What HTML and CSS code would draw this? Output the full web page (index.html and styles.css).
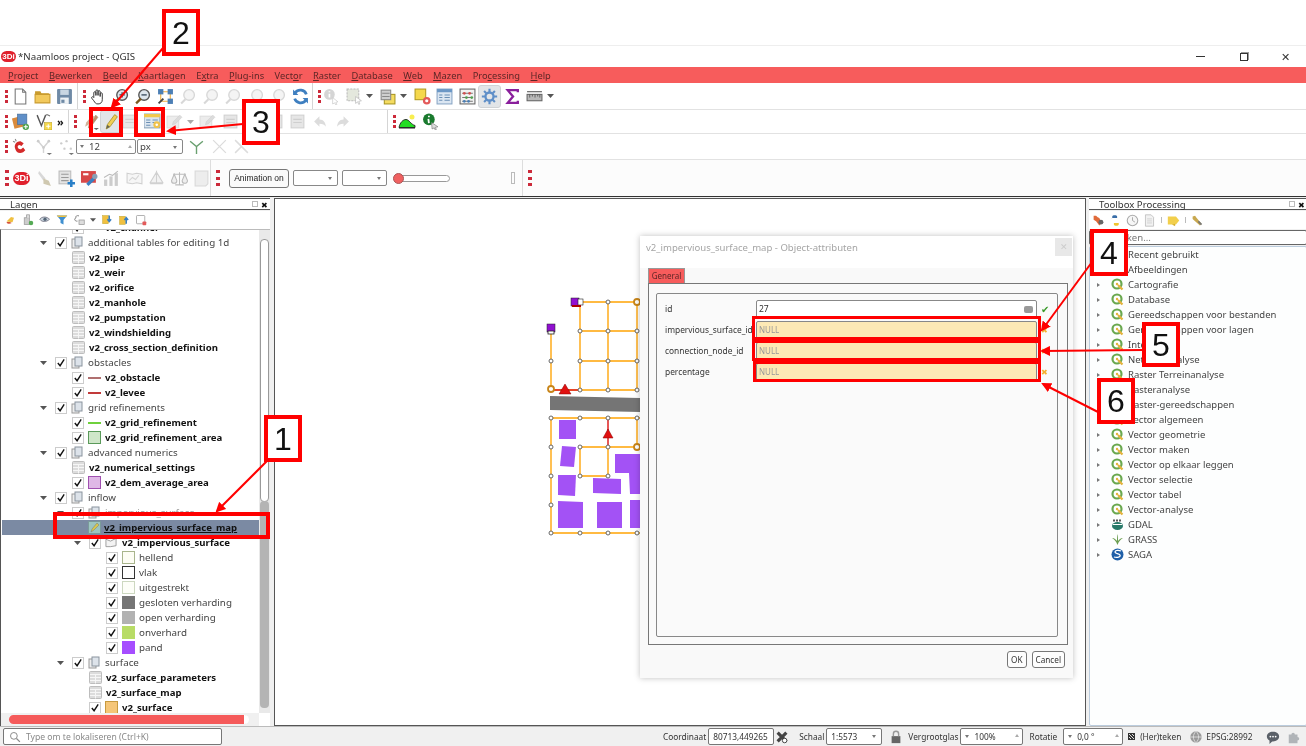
FILE: index.html
```html
<!DOCTYPE html>
<html lang="nl">
<head>
<meta charset="utf-8">
<title>*Naamloos project - QGIS</title>
<link rel="stylesheet" href="styles.css">
</head>
<body>
<svg class="defs" width="0" height="0">
  <symbol id="new" viewBox="0 0 16 16"><path d="M3 1h7l3 3v11H3z" fill="#fff" stroke="#777"/><path d="M10 1v3h3" fill="none" stroke="#777"/></symbol>
  <symbol id="open" viewBox="0 0 16 16"><path d="M1 3h5l1 2h7v2H1z" fill="#c99b2e"/><path d="M1 14V6h14v8z" fill="#f2c95c" stroke="#c99b2e"/></symbol>
  <symbol id="save" viewBox="0 0 16 16"><rect x="1" y="1" width="14" height="14" rx="1" fill="#6f8aa6"/><rect x="4" y="1.500" width="8" height="5" fill="#c9d6e2"/><rect x="4" y="9" width="8" height="6" fill="#eef2f5"/><rect x="5" y="11" width="3" height="3" fill="#6f8aa6"/></symbol>
  <symbol id="hand" viewBox="0 0 16 16"><path d="M4.500 9V4.500a1 1 0 0 1 2 0V7V2.800a1 1 0 0 1 2 0V7V3.500a1 1 0 0 1 2 0V8V5.500a1 1 0 0 1 2 0V11c0 2.500-1.500 4-4 4S6 14 4.500 12L2.500 9.500C2 8.500 3.500 7.500 4.500 9z" fill="#fff" stroke="#333" stroke-width=".9"/></symbol>
  <symbol id="zin" viewBox="0 0 16 16"><circle cx="9.500" cy="6.500" r="5" fill="#dfe6ec" stroke="#555" stroke-width="1.300"/><path d="M6.500 10L2 14.500" stroke="#7a5a20" stroke-width="2.200"/><path d="M7 6.500h5M9.500 4v5" stroke="#345" stroke-width="1.200"/></symbol>
  <symbol id="zout" viewBox="0 0 16 16"><circle cx="9.500" cy="6.500" r="5" fill="#dfe6ec" stroke="#555" stroke-width="1.300"/><path d="M6.500 10L2 14.500" stroke="#7a5a20" stroke-width="2.200"/><path d="M7 6.500h5" stroke="#345" stroke-width="1.200"/></symbol>
  <symbol id="zfull" viewBox="0 0 16 16"><path d="M4 3.500h8M3.500 4v8M12.500 4v8M4 12.500h8" stroke="#f0b040" stroke-width="1" fill="none"/><rect x="1" y="1" width="5" height="5" fill="#4c7fb5"/><rect x="10" y="1" width="5" height="5" fill="#4c7fb5"/><rect x="10" y="10" width="5" height="5" fill="#4c7fb5"/><path d="M6 10L1.500 14.500" stroke="#444" stroke-width="1.800"/></symbol>
  <symbol id="zdim" viewBox="0 0 16 16"><circle cx="9.500" cy="6.500" r="5" fill="#f4f4f4" stroke="#d8d8d8" stroke-width="1.300"/><path d="M6 10.500L2 14.500" stroke="#d8d8d8" stroke-width="2"/></symbol>
  <symbol id="refresh" viewBox="0 0 16 16"><path d="M13.500 6A6 6 0 0 0 3 4.500M2.500 10A6 6 0 0 0 13 11.500" fill="none" stroke="#3f7fc0" stroke-width="2.600"/><path d="M1 1.500v5h5zM15 14.500v-5h-5z" fill="#3f7fc0"/></symbol>
  <symbol id="idim" viewBox="0 0 16 16"><circle cx="7" cy="6" r="5" fill="#d5d5d5"/><path d="M7 3v1M7 5.500V9" stroke="#fff" stroke-width="1.600"/><path d="M10 9l5 4-2 .5 1 2-1 .5-1-2-2 1z" fill="#fff" stroke="#ccc" stroke-width=".7"/></symbol>
  <symbol id="seldim" viewBox="0 0 16 16"><rect x="1" y="1" width="11" height="11" fill="#e4e8dd" stroke="#bbb" stroke-dasharray="2 1"/><path d="M9 8l5.500 4-2.500.5 1 2.500-1 .5-1-2.500-2 1.500z" fill="#fff" stroke="#bbb" stroke-width=".7"/></symbol>
  <symbol id="laysel" viewBox="0 0 16 16"><rect x="5" y="6" width="10" height="9" fill="#f5dc60" stroke="#a99520"/><rect x="2" y="2" width="9" height="9" fill="#cfcfcf" stroke="#888"/><path d="M3 5h7M3 8h7" stroke="#888"/></symbol>
  <symbol id="yred" viewBox="0 0 16 16"><rect x="1" y="1" width="10" height="10" fill="#f5d84c" stroke="#b39a20"/><circle cx="12" cy="12" r="3.600" fill="#e35a5a"/><circle cx="12" cy="12" r="1.500" fill="#fff"/></symbol>
  <symbol id="attr" viewBox="0 0 16 16"><rect x="1" y="1" width="14" height="14" fill="#dbe6f2" stroke="#8aa7c6"/><rect x="1" y="1" width="14" height="3" fill="#6b97c6"/><path d="M3 6.500h3M8 6.500h5M3 9h3M8 9h5M3 11.500h3M8 11.500h5" stroke="#6b8fb5"/></symbol>
  <symbol id="abacus" viewBox="0 0 16 16"><rect x="1" y="1" width="14" height="14" fill="#f2f2f2" stroke="#666"/><path d="M3 5h10M3 9h10M3 12.500h10" stroke="#777"/><circle cx="5" cy="5" r="1.300" fill="#d05050"/><circle cx="10" cy="5" r="1.300" fill="#d05050"/><circle cx="7" cy="9" r="1.300" fill="#50a050"/><circle cx="12" cy="9" r="1.300" fill="#50a050"/><circle cx="5" cy="12.500" r="1.300" fill="#4c7fb5"/><circle cx="9" cy="12.500" r="1.300" fill="#4c7fb5"/></symbol>
  <symbol id="gear" viewBox="0 0 16 16"><circle cx="8" cy="8" r="3.800" fill="none" stroke="#5f8fc8" stroke-width="2.200"/><path d="M8 .8v3M8 12.200v3M.8 8h3M12.200 8h3M2.900 2.900L5 5M11 11l2.100 2.100M2.900 13.100L5 11M11 5l2.100-2.100" stroke="#5f8fc8" stroke-width="2"/></symbol>
  <symbol id="sigma" viewBox="0 0 16 16"><path d="M13 4V2H3.500L8.500 8 3.500 14H13v-2" fill="none" stroke="#8a1f9c" stroke-width="2.200"/></symbol>
  <symbol id="ruler" viewBox="0 0 16 16"><path d="M1 3.500h14" stroke="#555"/><rect x="1" y="6" width="14" height="6" fill="#b8b8b8" stroke="#666"/><path d="M3.500 6v3M6 6v2M8.500 6v3M11 6v2M13 6v3" stroke="#555" stroke-width=".8"/></symbol>
  <symbol id="caret" viewBox="0 0 7 4"><path d="M0 0h7L3.500 4z" fill="#555"/></symbol>
  <symbol id="caretl" viewBox="0 0 7 4"><path d="M0 0h7L3.500 4z" fill="#aaa"/></symbol>
  <symbol id="addl" viewBox="0 0 16 16"><rect x="1" y="4" width="9" height="10" fill="#d98a3c" transform="rotate(-14 5 9)"/><rect x="5" y="1" width="9" height="10" fill="#5f8fc8" stroke="#44688f" stroke-width=".5"/><circle cx="13" cy="13" r="3" fill="#4aa04a"/><path d="M11 13h4M13 11v4" stroke="#fff"/></symbol>
  <symbol id="vplus" viewBox="0 0 16 16"><path d="M2 2l4 10 4-10" fill="none" stroke="#555" stroke-width="1.300"/><path d="M10 2c2-1 3 0 4 1" fill="none" stroke="#555"/><rect x="9" y="9" width="7" height="7" fill="#f5d84c" stroke="#b39a20" stroke-width=".5"/><path d="M12.500 10.500v4M10.500 12.500h4" stroke="#fff"/></symbol>
  <symbol id="pen0" viewBox="0 0 16 16"><path d="M5 14l1-4 6-8 2 2-6 8z" fill="#c08f6a" stroke="#a58a70" stroke-width=".6"/><path d="M2 13l1-4 6-7 2 2-6 7z" fill="#d2b39b"/><path d="M10 14h5l-2.500 2z" fill="#666"/></symbol>
  <symbol id="pen" viewBox="0 0 16 16"><path d="M3 15l1-4 7-9.500 2.500 2L6.500 13z" fill="#f0cf55" stroke="#a8922e" stroke-width=".8"/><path d="M3 15l1-4 2.500 2z" fill="#665"/></symbol>
  <symbol id="attrn" viewBox="0 0 16 16"><rect x="0" y="1" width="15" height="13" fill="#dce6ef" stroke="#88a0b8"/><rect x="0" y="1" width="15" height="3" fill="#f2c94c"/><path d="M2 6.500h4M8 6.500h5M2 9h4M8 9h3M2 11.500h4" stroke="#6b8fb5"/><circle cx="12" cy="11" r="3.200" fill="#f0c24a"/><circle cx="12" cy="11" r="1.200" fill="#fff"/></symbol>
  <symbol id="dim" viewBox="0 0 16 16"><rect x="2" y="2" width="12" height="12" fill="#e6e6e6" stroke="#d0d0d0"/><path d="M4 6h8M4 9h8" stroke="#cfcfcf"/></symbol>
  <symbol id="dimpen" viewBox="0 0 16 16"><rect x="1" y="3" width="11" height="11" fill="#ececec" stroke="#ddd"/><path d="M6 11l1-3 6-6 2 2-6 6z" fill="#dcdcdc" stroke="#ccc" stroke-width=".5"/></symbol>
  <symbol id="undo" viewBox="0 0 16 16"><path d="M7 3L2 8l5 5V10c3 0 5 1 6 3 0-4-2-7-6-7z" fill="#dcdcdc"/></symbol>
  <symbol id="redo" viewBox="0 0 16 16"><path d="M9 3l5 5-5 5V10c-3 0-5 1-6 3 0-4 2-7 6-7z" fill="#dcdcdc"/></symbol>
  <symbol id="hill" viewBox="0 0 18 16"><path d="M1 14c1-5 4-8 7-8s5 5 9 6v2z" fill="#22dd22" stroke="#222" stroke-width=".9"/><path d="M1 14.500h16" stroke="#222"/><circle cx="14" cy="3.500" r="2.500" fill="#f8ee50"/></symbol>
  <symbol id="info" viewBox="0 0 16 16"><circle cx="6.500" cy="6" r="5.500" fill="#1a7a2e"/><path d="M6.500 2.500v1.500M6 5.500l.5 4" stroke="#fff" stroke-width="1.700"/><path d="M9 9l6 4-2.500.5 1 2-1 .5-1-2-2 1z" fill="#ddd" stroke="#777" stroke-width=".6"/></symbol>
  <symbol id="magnet" viewBox="0 0 16 16"><path d="M3 10a5 5 0 0 1 5-7l3 2-2 2.500-2-1c-1 0-2 1-1.500 2.500 .5 1 1.500 2 3 1.500l2-1.500 2 2.500-2 2c-4 1.500-6.500 0-7.500-3.500z" fill="#d42a2a"/><path d="M1 3l2 1M3 1l1 2" stroke="#888"/></symbol>
  <symbol id="vtxd" viewBox="0 0 16 16"><path d="M3 3l5 6 5-6M8 9v5" fill="none" stroke="#d4d4d4" stroke-width="1.300"/><circle cx="3" cy="3" r="1.300" fill="#ccc"/><circle cx="13" cy="3" r="1.300" fill="#ccc"/><circle cx="8" cy="9" r="1.300" fill="#ccc"/><path d="M11 14h5l-2.500 2z" fill="#777"/></symbol>
  <symbol id="dots" viewBox="0 0 16 16"><circle cx="4" cy="5" r="1.100" fill="#ccc"/><circle cx="9" cy="3" r="1.100" fill="#ccc"/><circle cx="7" cy="10" r="1.100" fill="#ccc"/><circle cx="13" cy="10" r="1.100" fill="#ccc"/><path d="M11 14h5l-2.500 2z" fill="#777"/></symbol>
  <symbol id="ygreen" viewBox="0 0 16 16"><path d="M2 3l6 5 6-5M8 8v7" fill="none" stroke="#6aa070" stroke-width="1.300"/></symbol>
  <symbol id="xdim" viewBox="0 0 16 16"><path d="M2 2l12 12M14 2L2 14" stroke="#dcdcdc" stroke-width="1.200"/></symbol>
  <symbol id="ydim" viewBox="0 0 16 16"><path d="M2 2l12 12M2 14l6-6" stroke="#dcdcdc" stroke-width="1.400"/></symbol>
  <symbol id="brush" viewBox="0 0 16 16"><path d="M3 1l6 7-2 2-5-7z" fill="#d8d8d8"/><path d="M7 8l5 2 2 5-7-2z" fill="#cfc8b0"/></symbol>
  <symbol id="tblplus" viewBox="0 0 16 16"><rect x="1" y="1" width="11" height="12" fill="#e4e4e4" stroke="#bbb"/><path d="M3 4h7M3 7h7M3 10h7" stroke="#999"/><path d="M9 12.500h7M12.500 9v7" stroke="#2a80c8" stroke-width="2.400"/></symbol>
  <symbol id="redtool" viewBox="0 0 16 16"><rect x="0" y="1" width="14" height="11" fill="#d84848"/><rect x="2" y="3" width="5" height="2" fill="#fff"/><path d="M6 14l6-6" stroke="#3a7fc0" stroke-width="3"/><circle cx="13" cy="6" r="2.500" fill="#8a9fb5"/></symbol>
  <symbol id="chart" viewBox="0 0 16 16"><rect x="1" y="9" width="3" height="6" fill="#ccc"/><rect x="6" y="6" width="3" height="9" fill="#ccc"/><rect x="11" y="3" width="3" height="12" fill="#ccc"/><path d="M1 7l5-3 3 1 5-4" fill="none" stroke="#bbb"/></symbol>
  <symbol id="mapd" viewBox="0 0 16 16"><path d="M1 3l5 1 4-1 5 1v9l-5-1-4 1-5-1z" fill="#f6f6f6" stroke="#d0d0d0"/><path d="M3 10l3-3 3 2 3-4" fill="none" stroke="#d5d5d5"/></symbol>
  <symbol id="tri" viewBox="0 0 16 16"><path d="M8 1v12M2 13h12M8 2L2 12h6zM8 2l6 10H8z" fill="#f2f2f2" stroke="#d0d0d0"/></symbol>
  <symbol id="scale" viewBox="0 0 16 16"><path d="M8 2v12M4 14h8M2 4h12" stroke="#bbb"/><path d="M0.500 10a2.500 2.500 0 0 0 5 0L3 4zM10.500 10a2.500 2.500 0 0 0 5 0L13 4z" fill="#eee" stroke="#bbb"/></symbol>
  <symbol id="tag" viewBox="0 0 16 16"><path d="M2 1h12v12l-2 2H2z" fill="#ededed" stroke="#d8d8d8"/></symbol>
  <symbol id="tbl" viewBox="0 0 13 13"><rect x=".5" y=".5" width="12" height="12" rx="1" fill="#dcdcdc" stroke="#bdbdbd"/><path d="M1 3.500h11M1 6.500h11M1 9.500h11M6.500 3.500v9" stroke="#f6f6f6"/></symbol>
  <symbol id="grp" viewBox="0 0 12 13"><rect x="1" y="3" width="7" height="9" fill="#eee" stroke="#999"/><rect x="4" y="1" width="7" height="9" fill="#dde3ea" stroke="#8a949e"/></symbol>
  <symbol id="qg" viewBox="0 0 13 13"><circle cx="6" cy="6" r="4.500" fill="#fff" stroke="#6aa84f" stroke-width="2.200"/><path d="M7 7l4.500 4.500" stroke="#e3b23c" stroke-width="2.200"/><circle cx="6" cy="6" r="1.200" fill="#e3b23c"/></symbol>
  <symbol id="gdal" viewBox="0 0 13 13"><ellipse cx="6.500" cy="8" rx="5.500" ry="4" fill="#2a7a6a"/><path d="M2 6.500h9" stroke="#fff"/><path d="M2 2.500h9" stroke="#555" stroke-width="2" stroke-dasharray="2 1"/></symbol>
  <symbol id="grass" viewBox="0 0 13 13"><path d="M6.500 12C5 8 3 6 1 5c3 0 4 2 5 3C6 5 6 3 6.500 1 7 3 7 5 7 8c1-1 2-3 5-3-2 1-4 3-5.500 7z" fill="#6c9e50"/></symbol>
  <symbol id="saga" viewBox="0 0 13 13"><circle cx="6.500" cy="6.500" r="6" fill="#1f5fa8"/><path d="M3 9c3 1 7 0 6-2S4 6 4 4s4-2 6-1" fill="none" stroke="#fff" stroke-width="1.300"/></symbol>
  <symbol id="tick" viewBox="0 0 11 11"><path d="M2 5.500l2.500 3L9 1.500" fill="none" stroke="#111" stroke-width="1.500"/></symbol>
  <symbol id="ly-edit" viewBox="0 0 13 13"><rect x=".5" y=".5" width="12" height="12" fill="#9cc6c0" stroke="#7a9a9a"/><path d="M3 11l1-3 5-6 2 2-5 5z" fill="#d8c84c" stroke="#667" stroke-width=".4"/></symbol>
  <symbol id="poly" viewBox="0 0 13 13"><path d="M1 3l5 2 6-3v8l-6 1-5 0z" fill="#f3f3f3" stroke="#999"/></symbol>
  <symbol id="pi1" viewBox="0 0 16 16"><path d="M2 2h3l2 2 2 1 3 6-3 3-4-5-3-2z" fill="#e06a3a"/><circle cx="11" cy="10" r="3" fill="#666"/></symbol>
  <symbol id="py" viewBox="0 0 16 16"><path d="M2 8c0-3 2-3 3-3h5V3c0-2-6-2-6 0v2c-2 0-2 3-2 3z" fill="#3a6ea8"/><path d="M14 8c0 3-2 3-3 3H6v2c0 2 6 2 6 0v-2c2 0 2-3 2-3z" fill="#f0c430"/></symbol>
  <symbol id="clock" viewBox="0 0 16 16"><circle cx="8" cy="8" r="6.500" fill="#f6f6f6" stroke="#aaa" stroke-width="1.300"/><path d="M8 4v4l3 2" fill="none" stroke="#aaa" stroke-width="1.200"/></symbol>
  <symbol id="doc" viewBox="0 0 16 16"><path d="M3 1h7l3 3v11H3z" fill="#f2f2f2" stroke="#bbb"/><path d="M5 6h6M5 8.500h6M5 11h6" stroke="#ccc"/></symbol>
  <symbol id="tagy" viewBox="0 0 16 16"><path d="M1 3h10l4 5-4 5H1z" fill="#f2cf4c"/><path d="M6 13l4 2v-3z" fill="#d6b030"/></symbol>
  <symbol id="wrench" viewBox="0 0 16 16"><path d="M2 3l3-1 2 3 6 7-2 2-7-6-2-2z" fill="#c8a850"/><path d="M9 9l4 4" stroke="#777" stroke-width="2"/></symbol>
  <symbol id="sty" viewBox="0 0 16 16"><path d="M2 10l6-6 4 1-2 6z" fill="#f0c040"/><path d="M2 11c3-1 6 0 7 1-3 2-6 1-7-1z" fill="#d4503a"/></symbol>
  <symbol id="addg" viewBox="0 0 16 16"><rect x="3" y="5" width="7" height="9" fill="#ccc" stroke="#999"/><path d="M6 5V1h4v4" fill="#ddd" stroke="#999"/><circle cx="12" cy="12" r="3" fill="#5a5"/></symbol>
  <symbol id="eye" viewBox="0 0 16 16"><path d="M1 7c3-4 9-4 13 0-4 4-10 4-13 0z" fill="#ccd6e0" stroke="#667"/><circle cx="8" cy="7" r="2.200" fill="#567"/></symbol>
  <symbol id="funnel" viewBox="0 0 16 16"><path d="M1 2h14L10 8v6l-4-2V8z" fill="#3f8fd0"/><path d="M1 2h14l-2 2H3z" fill="#f0c040"/></symbol>
  <symbol id="eps" viewBox="0 0 16 16"><path d="M8 2.500C5 1.500 3 3 4 5c-3 1-2 5 2 4.500" fill="none" stroke="#777" stroke-width="1.200"/><rect x="8" y="8" width="7" height="6" fill="#ddd" stroke="#999"/></symbol>
  <symbol id="expd" viewBox="0 0 16 16"><rect x="2" y="2" width="8" height="11" fill="#f0c040" stroke="#b39a20" stroke-width=".5"/><path d="M11 2v7M8.500 7l2.500 3 2.500-3" stroke="#3a7fc0" stroke-width="2" fill="none"/></symbol>
  <symbol id="expu" viewBox="0 0 16 16"><rect x="2" y="3" width="8" height="11" fill="#f0c040" stroke="#b39a20" stroke-width=".5"/><path d="M11 13V6M8.500 8l2.500-3 2.500 3" stroke="#3a7fc0" stroke-width="2" fill="none"/></symbol>
  <symbol id="rmv" viewBox="0 0 16 16"><rect x="2" y="2" width="11" height="11" rx="1" fill="#fff" stroke="#999"/><rect x="10" y="10" width="5" height="5" rx="1" fill="#e35a5a"/></symbol>
  <symbol id="sat" viewBox="0 0 16 16"><path d="M3 3l10 10M13 3L3 13" stroke="#444" stroke-width="3.600"/><circle cx="11" cy="12" r="2.600" fill="#fff" stroke="#333"/></symbol>
  <symbol id="lock" viewBox="0 0 16 16"><rect x="3" y="7" width="10" height="8" fill="#666"/><path d="M5 7V4.500a3 3 0 0 1 6 0V7" fill="none" stroke="#999" stroke-width="1.600"/></symbol>
  <symbol id="globe" viewBox="0 0 16 16"><circle cx="8" cy="8" r="6.500" fill="#999"/><path d="M1.500 8h13M8 1.500c-4 4-4 9 0 13M8 1.500c4 4 4 9 0 13" fill="none" stroke="#eee" stroke-width=".8"/></symbol>
  <symbol id="msg" viewBox="0 0 16 16"><path d="M8 2c4 0 7 2 7 5.500S12 13 8 13l-1 0-3 3v-4C2 11 1 9.500 1 7.500 1 4 4 2 8 2z" fill="#5a6068"/><circle cx="5" cy="7.500" r="1" fill="#fff"/><circle cx="8" cy="7.500" r="1" fill="#fff"/><circle cx="11" cy="7.500" r="1" fill="#fff"/></symbol>
  <symbol id="puzzle" viewBox="0 0 16 16"><path d="M2 5h3a2 2 0 0 1 4 0h3v3a2 2 0 0 1 0 4v3H2z" fill="#b0b4b8"/></symbol>
  <symbol id="search" viewBox="0 0 16 16"><circle cx="6.500" cy="6.500" r="4.500" fill="none" stroke="#888" stroke-width="1.300"/><path d="M10 10l4.500 4.500" stroke="#888" stroke-width="1.600"/></symbol>
  <marker id="ah" markerWidth="5" markerHeight="5" refX="4" refY="2.500" orient="auto"><path d="M0 0l5 2.500L0 5z" fill="#f00"/></marker>
</svg>

<div class="app">
  <div class="gap-top"></div>
  <header class="titlebar">
    <span class="logo">3Di</span>
    <span class="title">*Naamloos project - QGIS</span>
    <span class="wbtns">
      <span class="wmin"></span>
      <span class="wmax"></span>
      <span class="wclose">✕</span>
    </span>
  </header>
  <nav class="menu">
    <span><u>P</u>roject</span><span><u>B</u>ewerken</span><span><u>B</u>eeld</span><span><u>K</u>aartlagen</span><span>E<u>x</u>tra</span><span><u>P</u>lug-ins</span><span>Vect<u>o</u>r</span><span><u>R</u>aster</span><span><u>D</u>atabase</span><span><u>W</u>eb</span><span><u>M</u>azen</span><span>Pro<u>c</u>essing</span><span><u>H</u>elp</span>
  </nav>

  <div class="tbar t1">
    <i class="grip"></i>
    <div class="tg w66">
      <svg class="ic"><use href="#new"/></svg><svg class="ic"><use href="#open"/></svg><svg class="ic"><use href="#save"/></svg>
    </div>
    <b class="sep"></b><i class="grip"></i>
    <div class="tg g225 nopad w223">
      <svg class="ic"><use href="#hand"/></svg><svg class="ic"><use href="#zin"/></svg><svg class="ic"><use href="#zout"/></svg><svg class="ic"><use href="#zfull"/></svg><svg class="ic"><use href="#zdim"/></svg><svg class="ic"><use href="#zdim"/></svg><svg class="ic"><use href="#zdim"/></svg><svg class="ic"><use href="#zdim"/></svg><svg class="ic"><use href="#zdim"/></svg><svg class="ic"><use href="#refresh"/></svg>
    </div>
    <b class="sep"></b><i class="grip"></i>
    <div class="tg g225 nopad pull2">
      <svg class="ic"><use href="#idim"/></svg><svg class="ic ml1"><use href="#seldim"/></svg><svg class="dd"><use href="#caret"/></svg><svg class="ic"><use href="#laysel"/></svg><svg class="dd ml1"><use href="#caret"/></svg><svg class="ic ml1"><use href="#yred"/></svg><svg class="ic"><use href="#attr"/></svg><svg class="ic"><use href="#abacus"/></svg><span class="on"><svg class="ic"><use href="#gear"/></svg></span><svg class="ic"><use href="#sigma"/></svg><svg class="ic"><use href="#ruler"/></svg><svg class="dd"><use href="#caret"/></svg>
    </div>
  </div>

  <div class="tbar t2">
    <i class="grip"></i>
    <div class="tg g225 w57">
      <svg class="ic"><use href="#addl"/></svg><svg class="ic"><use href="#vplus"/></svg><span class="more">»</span>
    </div>
    <b class="sep"></b><i class="grip"></i>
    <div class="tg g225 w307">
      <svg class="ic"><use href="#pen0"/></svg><span class="on tight3"><svg class="ic"><use href="#pen"/></svg></span><svg class="ic ml-4"><use href="#dim"/></svg><svg class="ic"><use href="#attrn"/></svg><svg class="ic"><use href="#dimpen"/></svg><svg class="dd"><use href="#caretl"/></svg><svg class="ic"><use href="#dimpen"/></svg><svg class="ic"><use href="#dim"/></svg><svg class="ic"><use href="#dim"/></svg><svg class="ic"><use href="#dim"/></svg><svg class="ic"><use href="#dim"/></svg><svg class="ic"><use href="#undo"/></svg><svg class="ic"><use href="#redo"/></svg>
    </div>
    <b class="sep"></b><i class="grip"></i>
    <div class="tg g225 nopad pull1">
      <svg class="ic wide"><use href="#hill"/></svg><svg class="ic"><use href="#info"/></svg>
    </div>
  </div>

  <div class="tbar t3">
    <i class="grip"></i>
    <div class="tg g225 t3icons">
      <svg class="ic"><use href="#magnet"/></svg><svg class="ic"><use href="#vtxd"/></svg><svg class="ic"><use href="#dots"/></svg>
    </div>
    <span class="spin s12"><span class="cdn"></span><span class="val">12</span><span class="cup"></span></span>
    <span class="spin s-px"><span class="val">px</span><span class="cdn end"></span></span>
    <div class="tg g225 after-px">
      <svg class="ic"><use href="#ygreen"/></svg><svg class="ic"><use href="#xdim"/></svg><svg class="ic"><use href="#ydim"/></svg>
    </div>
  </div>

  <div class="tbar t4">
    <i class="grip big"></i>
    <div class="tg g225 w-plug">
      <span class="logo big">3Di</span><svg class="ic"><use href="#brush"/></svg><svg class="ic"><use href="#tblplus"/></svg><svg class="ic"><use href="#redtool"/></svg><svg class="ic"><use href="#chart"/></svg><svg class="ic"><use href="#mapd"/></svg><svg class="ic"><use href="#tri"/></svg><svg class="ic"><use href="#scale"/></svg><svg class="ic"><use href="#tag"/></svg>
    </div>
    <b class="sep tall"></b><i class="grip big"></i>
    <button class="anim">Animation on</button>
    <span class="spin cmb"><span class="cdn end"></span></span>
    <span class="spin cmb"><span class="cdn end"></span></span>
    <span class="slider"><i class="knob"></i></span>
    <span class="smallrect"></span>
    <b class="sep tall"></b><i class="grip big"></i>
  </div>

  <main class="work">
    <section class="dock left">
      <div class="dock-title"><span>Lagen</span><span class="dock-btns"><i class="dock-float"></i><i class="dock-x">✖</i></span></div>
      <div class="dock-tools">
        <svg class="ti"><use href="#sty"/></svg><svg class="ti"><use href="#addg"/></svg><svg class="ti"><use href="#eye"/></svg><svg class="ti"><use href="#funnel"/></svg><svg class="ti"><use href="#eps"/></svg><svg class="dd tight"><use href="#caret"/></svg><svg class="ti"><use href="#expd"/></svg><svg class="ti"><use href="#expu"/></svg><svg class="ti"><use href="#rmv"/></svg>
      </div>
      <div class="tree-wrap">
        <div class="tree">
          <div class="row p72"><span class="cb"><svg><use href="#tick"/></svg></span><span class="sw none"></span><span class="bold">v2_channel</span></div>
          <div class="row p40"><svg class="car"><use href="#caret"/></svg><span class="cb"><svg><use href="#tick"/></svg></span><svg class="gi"><use href="#grp"/></svg><span>additional tables for editing 1d</span></div>
          <div class="row p72"><svg class="ti13"><use href="#tbl"/></svg><span class="bold">v2_pipe</span></div>
          <div class="row p72"><svg class="ti13"><use href="#tbl"/></svg><span class="bold">v2_weir</span></div>
          <div class="row p72"><svg class="ti13"><use href="#tbl"/></svg><span class="bold">v2_orifice</span></div>
          <div class="row p72"><svg class="ti13"><use href="#tbl"/></svg><span class="bold">v2_manhole</span></div>
          <div class="row p72"><svg class="ti13"><use href="#tbl"/></svg><span class="bold">v2_pumpstation</span></div>
          <div class="row p72"><svg class="ti13"><use href="#tbl"/></svg><span class="bold">v2_windshielding</span></div>
          <div class="row p72"><svg class="ti13"><use href="#tbl"/></svg><span class="bold">v2_cross_section_definition</span></div>
          <div class="row p40"><svg class="car"><use href="#caret"/></svg><span class="cb"><svg><use href="#tick"/></svg></span><svg class="gi"><use href="#grp"/></svg><span>obstacles</span></div>
          <div class="row p72"><span class="cb"><svg><use href="#tick"/></svg></span><span class="sw ln brown"></span><span class="bold">v2_obstacle</span></div>
          <div class="row p72"><span class="cb"><svg><use href="#tick"/></svg></span><span class="sw ln red"></span><span class="bold">v2_levee</span></div>
          <div class="row p40"><svg class="car"><use href="#caret"/></svg><span class="cb"><svg><use href="#tick"/></svg></span><svg class="gi"><use href="#grp"/></svg><span>grid refinements</span></div>
          <div class="row p72"><span class="cb"><svg><use href="#tick"/></svg></span><span class="sw ln green"></span><span class="bold">v2_grid_refinement</span></div>
          <div class="row p72"><span class="cb"><svg><use href="#tick"/></svg></span><span class="sw area-g"></span><span class="bold">v2_grid_refinement_area</span></div>
          <div class="row p40"><svg class="car"><use href="#caret"/></svg><span class="cb"><svg><use href="#tick"/></svg></span><svg class="gi"><use href="#grp"/></svg><span>advanced numerics</span></div>
          <div class="row p72"><svg class="ti13"><use href="#tbl"/></svg><span class="bold">v2_numerical_settings</span></div>
          <div class="row p72"><span class="cb"><svg><use href="#tick"/></svg></span><span class="sw area-p"></span><span class="bold">v2_dem_average_area</span></div>
          <div class="row p40"><svg class="car"><use href="#caret"/></svg><span class="cb"><svg><use href="#tick"/></svg></span><svg class="gi"><use href="#grp"/></svg><span>inflow</span></div>
          <div class="row p57"><svg class="car"><use href="#caret"/></svg><span class="cb"><svg><use href="#tick"/></svg></span><svg class="gi"><use href="#grp"/></svg><span class="faint">impervious_surface</span></div>
          <div class="row sel"><svg class="ti13 m3"><use href="#ly-edit"/></svg><span class="bold under">v2_impervious_surface_map</span></div>
          <div class="row p74"><svg class="car"><use href="#caret"/></svg><span class="cb"><svg><use href="#tick"/></svg></span><svg class="gi"><use href="#poly"/></svg><span class="bold">v2_impervious_surface</span></div>
          <div class="row p106"><span class="cb"><svg><use href="#tick"/></svg></span><span class="sw o-g"></span><span>hellend</span></div>
          <div class="row p106"><span class="cb"><svg><use href="#tick"/></svg></span><span class="sw o-k"></span><span>vlak</span></div>
          <div class="row p106"><span class="cb"><svg><use href="#tick"/></svg></span><span class="sw o-l"></span><span>uitgestrekt</span></div>
          <div class="row p106"><span class="cb"><svg><use href="#tick"/></svg></span><span class="sw f-dk"></span><span>gesloten verharding</span></div>
          <div class="row p106"><span class="cb"><svg><use href="#tick"/></svg></span><span class="sw f-lt"></span><span>open verharding</span></div>
          <div class="row p106"><span class="cb"><svg><use href="#tick"/></svg></span><span class="sw f-gr"></span><span>onverhard</span></div>
          <div class="row p106"><span class="cb"><svg><use href="#tick"/></svg></span><span class="sw f-pu"></span><span>pand</span></div>
          <div class="row p57"><svg class="car"><use href="#caret"/></svg><span class="cb"><svg><use href="#tick"/></svg></span><svg class="gi"><use href="#grp"/></svg><span>surface</span></div>
          <div class="row p89"><svg class="ti13"><use href="#tbl"/></svg><span class="bold">v2_surface_parameters</span></div>
          <div class="row p89"><svg class="ti13"><use href="#tbl"/></svg><span class="bold">v2_surface_map</span></div>
          <div class="row p89"><span class="cb"><svg><use href="#tick"/></svg></span><span class="sw f-or"></span><span class="bold">v2_surface</span></div>
        </div>
        <div class="vscroll"><i class="thumb-w"></i><i class="thumb-g"></i></div>
        <div class="hscroll"><i class="hthumb"></i></div>
      </div>
    </section>

    <section class="canvas">
      <svg class="map" viewBox="275 197 810 529">
        <g fill="none" stroke="#ffba42" stroke-width="1.800">
          <path d="M580 300H637M580 300V388M608 300V388M637 300V388M580 329H637M580 359H637M551 388H637M551 330V388"/>
          <path d="M551 416H640M551 416V531M551 531H640M580 445V474M608 445V474M580 445H640M580 474H608M637 416V445"/>
        </g>
        <path d="M551 388H580M608 416V445" stroke="#e02020" stroke-width="1.500"/>
        <path d="M550 394L640 396V410L550 408Z" fill="#757575"/>
        <g fill="#a352f5">
          <path d="M559 418H576V437H559Z"/><path d="M562 444L576 445L574 465L560 464Z"/><path d="M558 473L576 473L575 494L558 493Z"/>
          <path d="M558 499L583 500L583 526L558 526Z"/><path d="M593 476L621 477L621 492L593 491Z"/><path d="M597 500L622 500L622 526L597 526Z"/>
          <path d="M615 452H640V492H630L629 471H615Z"/><path d="M630 498H640V526H630Z"/>
        </g>
        <g fill="#e01010" stroke="#800" stroke-width=".5"><path d="M565 382L571 392H559Z"/><path d="M608 427L613 436H603Z"/></g>
        <g fill="#fff" stroke="#666" stroke-width="1">
          <circle cx="608" cy="300" r="2"/><circle cx="580" cy="329" r="2"/><circle cx="608" cy="329" r="2"/><circle cx="637" cy="329" r="2"/><circle cx="551" cy="359" r="2"/><circle cx="580" cy="359" r="2"/><circle cx="608" cy="359" r="2"/><circle cx="637" cy="359" r="2"/><circle cx="580" cy="388" r="2"/><circle cx="608" cy="388" r="2"/><circle cx="637" cy="388" r="2"/>
          <circle cx="551" cy="416" r="2"/><circle cx="580" cy="416" r="2"/><circle cx="608" cy="416" r="2"/><circle cx="637" cy="416" r="2"/><circle cx="551" cy="445" r="2"/><circle cx="580" cy="445" r="2"/><circle cx="608" cy="445" r="2"/><circle cx="551" cy="474" r="2"/><circle cx="580" cy="474" r="2"/><circle cx="608" cy="474" r="2"/><circle cx="551" cy="503" r="2"/><circle cx="551" cy="531" r="2"/><circle cx="580" cy="531" r="2"/><circle cx="608" cy="531" r="2"/><circle cx="637" cy="531" r="2"/>
        </g>
        <g fill="#fff" stroke="#c8851a" stroke-width="1.800"><circle cx="551" cy="387" r="3"/><circle cx="637" cy="445" r="3"/><circle cx="637" cy="300" r="3"/></g>
        <g><rect x="571" y="296" width="8" height="8" fill="#9010d0" stroke="#222" stroke-width=".5"/><rect x="578" y="297" width="5" height="6" fill="#fff" stroke="#222" stroke-width=".6"/><rect x="572" y="303" width="9" height="2" fill="#a00"/><rect x="547" y="322" width="8" height="8" fill="#9010d0" stroke="#222" stroke-width=".5"/><rect x="548" y="329" width="6" height="3" fill="#fff" stroke="#222" stroke-width=".8"/></g>
      </svg>
    </section>

    <section class="dock right">
      <div class="dock-title"><span>Toolbox Processing</span><span class="dock-btns"><i class="dock-float"></i><i class="dock-x">✖</i></span></div>
      <div class="dock-tools rt">
        <svg class="ti"><use href="#pi1"/></svg><svg class="ti"><use href="#py"/></svg><svg class="ti"><use href="#clock"/></svg><svg class="ti"><use href="#doc"/></svg><i class="vb"></i><svg class="ti"><use href="#tagy"/></svg><i class="vb"></i><svg class="ti"><use href="#wrench"/></svg>
      </div>
      <div class="tb-search">Zoeken...</div>
      <div class="tb-tree">
        <div class="trow"><span class="ar"></span><svg class="gi"><use href="#zdim"/></svg><span>Recent gebruikt</span></div>
        <div class="trow"><span class="ar"></span><svg class="gi"><use href="#qg"/></svg><span>Afbeeldingen</span></div>
        <div class="trow"><span class="ar"></span><svg class="gi"><use href="#qg"/></svg><span>Cartografie</span></div>
        <div class="trow"><span class="ar"></span><svg class="gi"><use href="#qg"/></svg><span>Database</span></div>
        <div class="trow"><span class="ar"></span><svg class="gi"><use href="#qg"/></svg><span>Gereedschappen voor bestanden</span></div>
        <div class="trow"><span class="ar"></span><svg class="gi"><use href="#qg"/></svg><span>Gereedschappen voor lagen</span></div>
        <div class="trow"><span class="ar"></span><svg class="gi"><use href="#qg"/></svg><span>Interpolatie</span></div>
        <div class="trow"><span class="ar"></span><svg class="gi"><use href="#qg"/></svg><span>Netwerkanalyse</span></div>
        <div class="trow"><span class="ar"></span><svg class="gi"><use href="#qg"/></svg><span>Raster Terreinanalyse</span></div>
        <div class="trow"><span class="ar"></span><svg class="gi"><use href="#qg"/></svg><span>Rasteranalyse</span></div>
        <div class="trow"><span class="ar"></span><svg class="gi"><use href="#qg"/></svg><span>Raster-gereedschappen</span></div>
        <div class="trow"><span class="ar"></span><svg class="gi"><use href="#qg"/></svg><span>Vector algemeen</span></div>
        <div class="trow"><span class="ar"></span><svg class="gi"><use href="#qg"/></svg><span>Vector geometrie</span></div>
        <div class="trow"><span class="ar"></span><svg class="gi"><use href="#qg"/></svg><span>Vector maken</span></div>
        <div class="trow"><span class="ar"></span><svg class="gi"><use href="#qg"/></svg><span>Vector op elkaar leggen</span></div>
        <div class="trow"><span class="ar"></span><svg class="gi"><use href="#qg"/></svg><span>Vector selectie</span></div>
        <div class="trow"><span class="ar"></span><svg class="gi"><use href="#qg"/></svg><span>Vector tabel</span></div>
        <div class="trow"><span class="ar"></span><svg class="gi"><use href="#qg"/></svg><span>Vector-analyse</span></div>
        <div class="trow"><span class="ar"></span><svg class="gi"><use href="#gdal"/></svg><span>GDAL</span></div>
        <div class="trow"><span class="ar"></span><svg class="gi"><use href="#grass"/></svg><span>GRASS</span></div>
        <div class="trow"><span class="ar"></span><svg class="gi"><use href="#saga"/></svg><span>SAGA</span></div>
      </div>
    </section>
  </main>

  <footer class="status">
    <div class="locator"><svg class="ti12"><use href="#search"/></svg><span>Type om te lokaliseren (Ctrl+K)</span></div>
    <span class="st-l first">Coordinaat</span><span class="st-in w66i">80713,449265</span><svg class="st-ic sat"><use href="#sat"/></svg>
    <span class="st-l m-schaal">Schaal</span><span class="st-in w56i">1:5573<i class="cdn end"></i></span><svg class="st-ic lockic"><use href="#lock"/></svg>
    <span class="st-l">Vergrootglas</span><span class="st-in w63i"><i class="cdn"></i>100%<i class="cup end"></i></span>
    <span class="st-l m6">Rotatie</span><span class="st-in w60i"><i class="cdn"></i>0,0 °<i class="cup end"></i></span>
    <span class="st-cb"></span><span class="st-l her">(Her)teken</span><svg class="st-ic globe"><use href="#globe"/></svg><span class="st-l">EPSG:28992</span><svg class="st-ic msg"><use href="#msg"/></svg><svg class="st-ic puz"><use href="#puzzle"/></svg>
  </footer>

  <div class="dialog">
    <div class="dlg-title"><span>v2_impervious_surface_map - Object-attributen</span><span class="dlg-x">✕</span></div>
    <div class="tabs"><span class="tab">General</span></div>
    <div class="pane">
      <div class="group">
        <div class="frow"><label>id</label><span class="fin plain">27<i class="clear"></i></span><span class="ok">✔</span></div>
        <div class="frow"><label>impervious_surface_id</label><span class="fin">NULL</span><span class="warn">✖</span></div>
        <div class="frow"><label>connection_node_id</label><span class="fin">NULL</span><span class="warn">✖</span></div>
        <div class="frow"><label>percentage</label><span class="fin">NULL</span><span class="warn">✖</span></div>
      </div>
    </div>
    <div class="dlg-btns"><button>OK</button><button>Cancel</button></div>
  </div>

  <svg class="arrows" viewBox="0 0 1306 746">
    <g stroke="#f00" stroke-width="2" fill="none">
      <path d="M270 458L217 511" marker-end="url(#ah)"/>
      <path d="M163 48L112 107" marker-end="url(#ah)"/>
      <path d="M243 124L168 131" marker-end="url(#ah)"/>
      <path d="M1092 262L1042 330" marker-end="url(#ah)"/>
      <path d="M1143 350L1042 351" marker-end="url(#ah)"/>
      <path d="M1098 412L1043 384" marker-end="url(#ah)"/>
    </g>
  </svg>
  <i class="hl h-pen"></i><i class="hl h-attr"></i><i class="hl h-layer"></i>
  <i class="hl h-f1"></i><i class="hl h-f2"></i><i class="hl h-f3"></i>
  <div class="num n1">1</div><div class="num n2">2</div><div class="num n3">3</div><div class="num n4">4</div><div class="num n5">5</div><div class="num n6">6</div>
</div>
</body>
</html>
```

FILE: styles.css
```css
* { box-sizing: border-box; }
html, body { margin: 0; height: 100%; overflow: hidden; background: #fff; }
body { font-family: "Noto Sans", "Open Sans", sans-serif; font-size: 9.600px; color: #444; }
.defs { position: absolute; }
.app { position: relative; width: 1306px; height: 746px; display: flex; flex-direction: column; overflow: hidden; filter: blur(.4px); }
.gap-top { height: 46px; border-bottom: 1px solid #eee; flex: none; }
.titlebar { height: 21px; flex: none; display: flex; align-items: center; padding-left: 1px; background: #fff; }
.logo { display: inline-flex; align-items: center; justify-content: center; width: 15px; height: 11px; margin-right: 2px; background: #e0202c; border-radius: 6px; color: #fff; font: 700 8px/1 "Liberation Sans", sans-serif; flex: none; }
.logo.big { width: 17px; height: 13px; margin-right: 0; font-size: 9px; border-radius: 7px; }
.title { font-size: 9.700px; color: #333; }
.wbtns { margin-left: auto; display: flex; align-items: center; width: 130px; height: 100%; padding-left: 20px; }
.wmin { width: 9px; border-top: 1px solid #333; }
.wmax { width: 8px; height: 8px; border: 1px solid #333; margin-left: 35px; box-shadow: 1px -1px 0 #999; }
.wclose { margin-left: 33px; font-size: 11px; color: #333; }
.menu { height: 16px; flex: none; background: #f75c5c; display: flex; align-items: center; padding: 1px 0 0 8px; gap: 10.500px; color: #5d2626; font-size: 9.300px; }
.menu u { text-decoration-thickness: 1px; }

.tbar { display: flex; align-items: center; flex: none; background: #fff; border-bottom: 1px solid #e2e2e2; }
.t1 { height: 27px; }
.t2 { height: 24px; }
.t3 { height: 26px; }
.t4 { height: 37px; background: #fcfcfc; border-bottom: 1px solid #333; }
.grip { width: 3px; height: 13px; flex: none; margin-left: 5px; margin-right: 3px; background: repeating-linear-gradient(#cc2a3a 0 3px, transparent 3px 5px); }
.grip.big { height: 16px; width: 4px; background: repeating-linear-gradient(#cc2a3a 0 3px, transparent 3px 6.500px); }
.sep { width: 1px; height: 100%; background: #d5d5d5; flex: none; }
.sep.tall { background: #ddd; }
.tg { display: flex; align-items: center; gap: 5px; padding-left: 3px; flex: none; }
.w66 { width: 66px; padding-left: 1px; }
.w57 { width: 57px; padding-left: 1px; }
.w223 { width: 223px; }
.w307 { width: 307px; }
.g225 { gap: 5.500px; }
.nopad { padding-left: 0; }
.pull2 { margin-left: -2px; }
.pull1 { margin-left: -1px; }
.ml1 { margin-left: 1px; }
.ml-4 { margin-left: -4px; }
.ic { width: 17px; height: 17px; flex: none; }
.ic.wide { width: 18px; }
.dd { width: 7px; height: 4px; flex: none; margin: 0 0 0 -2px; }
.dd.ml1 { margin-left: -1px; }
.on { display: inline-flex; padding: 2px; margin: -3px; background: #e2e5e8; border: 1px solid #d0d3d6; border-radius: 3px; }
.on.tight3 { margin-left: -6px; }
.more { font-size: 11px; width: 6px; color: #111; font-weight: 700; }
.t3icons { width: 65px; padding-left: 1px; }
.spin { display: inline-flex; align-items: center; height: 15px; border: 1px solid #888; border-radius: 2px; background: #fff; position: relative; font-size: 9.600px; color: #444; flex: none; }
.s12 { width: 60px; padding-left: 3px; gap: 5px; }
.s-px { width: 46px; padding-left: 2px; margin-left: 1px; }
.after-px { padding-left: 5px; }
.cdn { display: inline-block; width: 0; height: 0; border: 2.500px solid transparent; border-top: 3px solid #777; border-bottom: 0; }
.cup { display: inline-block; width: 0; height: 0; border: 2.500px solid transparent; border-bottom: 3px solid #aaa; border-top: 0; position: absolute; right: 3px; top: 5px; }
.cdn.end { position: absolute; right: 5px; top: 6px; }
.cup.end { right: 3px; }
.w-plug { width: 198px; padding-left: 1px; }
.anim { width: 60px; height: 19px; margin-left: 6px; padding: 0; border: 1px solid #777; border-radius: 3px; background: #fafafa; font: 8.500px "Liberation Sans", sans-serif; color: #222; flex: none; }
.cmb { width: 45px; height: 16px; margin-left: 4px; }
.slider { position: relative; width: 52px; height: 7px; margin-left: 11px; border: 1px solid #999; border-radius: 4px; background: #fff; flex: none; }
.knob { position: absolute; left: -6px; top: -3px; width: 11px; height: 11px; border-radius: 50%; background: #f06060; border: 1px solid #a55; }
.smallrect { width: 4px; height: 12px; border: 1px solid #bbb; margin-left: 61px; margin-right: 7px; flex: none; }

.work { flex: 1; display: flex; min-height: 0; background: #f0f0f0; }
.dock { display: flex; flex-direction: column; flex: none; }
.dock.left { width: 270px; }
.dock.right { width: 218px; margin-left: 3px; }
.dock-title { height: 12px; margin: 1px 0 1px; display: flex; align-items: center; justify-content: space-between; background: #fff; border: 1px solid #555; border-width: 1px 0; padding: 0 2px 0 10px; color: #333; font-size: 9.600px; flex: none; }
.dock-btns { display: flex; align-items: center; gap: 3px; }
.dock-float { width: 6px; height: 6px; border: 1px solid #bbb; }
.dock-x { font-size: 8px; color: #111; font-style: normal; }
.dock-tools { height: 18px; display: flex; align-items: center; gap: 5px; padding-left: 5px; flex: none; background: #fff; }
.ti { width: 12px; height: 12px; flex: none; }
.dd.tight { margin: 0; width: 6px; }
.tree-wrap { position: relative; flex: 1; min-height: 0; overflow: hidden; background: #fff; border-left: 1px solid #555; border-top: 1px solid #bbb; }
.tree { margin-top: -10px; }
.row { height: 15px; display: flex; align-items: center; white-space: nowrap; color: #444; font-size: 9.800px; }
.p40 { padding-left: 39px; }
.p57 { padding-left: 56px; }
.p72 { padding-left: 71px; }
.p74 { padding-left: 73px; }
.p89 { padding-left: 88px; }
.p106 { padding-left: 105px; }
.car { width: 7px; height: 4px; margin-right: 8px; flex: none; }
.cb { width: 12px; height: 12px; background: #fff; border: 1px solid #ccc; margin-right: 4px; flex: none; display: flex; align-items: center; justify-content: center; }
.cb svg { width: 10px; height: 10px; }
.gi { width: 12px; height: 13px; margin-right: 5px; flex: none; }
.ti13 { width: 13px; height: 13px; margin-right: 4px; flex: none; }
.ti13.m3 { margin-right: 3px; }
.bold { font-weight: 700; color: #111; font-size: 9.600px; }
.under { text-decoration: underline; }
.faint { color: #999; }
.sel { background: #7b8aa3; margin-left: 1px; padding-left: 86px; width: 257px; }
.sw { width: 13px; height: 13px; margin-right: 4px; flex: none; border: 1px solid #bbb; }
.sw.none { border: 0; }
.sw.ln { border: 0; height: 2px; }
.brown { background: #b07070; }
.red { background: #c23a3a; }
.green { background: #6fd13c; }
.area-g { background: #cfe6c9; border-color: #5a9a5a; }
.area-p { background: #dfb8e6; border-color: #a050b0; }
.o-g { background: #fdfdf4; border-color: #a9b58c; }
.o-k { background: #fff; border-color: #333; }
.o-l { background: #fdfef8; border-color: #cdd8c0; }
.f-dk { background: #757575; border-color: #757575; }
.f-lt { background: #b2b2b2; border-color: #b2b2b2; }
.f-gr { background: #b8dc66; border-color: #b8dc66; }
.f-pu { background: #a64dff; border-color: #a64dff; }
.f-or { background: #f5c678; border-color: #c79a3f; }
.vscroll { position: absolute; right: 0; top: 0; bottom: 13px; width: 11px; background: #e9e9e9; }
.thumb-w { position: absolute; left: 1px; right: 1px; top: 9px; height: 263px; background: #fff; border: 1px solid #999; border-radius: 4px; }
.thumb-g { position: absolute; left: 1px; right: 1px; top: 271px; height: 207px; background: #b4b4b4; border-radius: 4px; }
.hscroll { position: absolute; left: 0; right: 11px; bottom: 0; height: 13px; background: #f0f0f0; }
.hthumb { position: absolute; left: 8px; top: 2px; height: 9px; width: 240px; background: #f55a5a; border-radius: 5px; border-right: 5px solid #fff; }

.canvas { width: 812px; margin-left: 4px; flex: none; background: #fff; border: 1px solid #555; margin-top: 1px; }
.map { display: block; width: 810px; height: 529px; }
.dock-tools.rt { gap: 4px; padding-left: 3px; }
.dock-tools.rt .ti { width: 13px; height: 13px; }
.vb { width: 1px; height: 6px; background: #bbb; margin: 0 1px; }
.tb-search { height: 15px; margin: 1px 0; border: 1px solid #666; border-radius: 2px; background: #fff; padding-left: 20px; line-height: 13px; color: #777; font-size: 9.600px; flex: none; }
.tb-tree { flex: 1; background: #fdfefe; border: 1px solid #bcd; border-radius: 2px; overflow: hidden; }
.trow { height: 15px; display: flex; align-items: center; padding-left: 7px; color: #444; font-size: 9.500px; white-space: nowrap; }
.ar { width: 0; height: 0; border: 2.500px solid transparent; border-left: 3px solid #777; border-right: 0; margin-right: 11px; flex: none; }
.trow .gi { width: 13px; margin-right: 4px; }

.status { height: 20px; flex: none; display: flex; align-items: center; background: #f0f0f0; border-top: 1px solid #bbb; color: #333; font-size: 8.300px; white-space: nowrap; }
.locator { width: 219px; height: 17px; margin-left: 3px; border: 1px solid #777; border-radius: 2px; background: #fff; display: flex; align-items: center; gap: 5px; padding-left: 5px; color: #888; font-size: 8.600px; flex: none; }
.ti12 { width: 12px; height: 12px; }
.st-l { flex: none; }
.st-l.first { margin-left: 441px; }
.st-in { position: relative; display: inline-flex; align-items: center; gap: 5px; height: 17px; margin-left: 2px; border: 1px solid #777; border-radius: 2px; background: #fff; padding-left: 4px; flex: none; }
.w66i { width: 66px; }
.w56i { width: 56px; }
.w63i { width: 63px; }
.w60i { width: 60px; }
.st-ic { width: 14px; height: 14px; flex: none; }
.sat { margin-left: 1px; }
.m-schaal { margin-left: 10px; }
.lockic { margin-left: 7px; margin-right: 5px; }
.m6 { margin-left: 6px; margin-right: 4px; }
.st-cb { width: 7px; height: 7px; margin-left: 5px; border: 1px solid #333; background: repeating-linear-gradient(45deg, #333 0 1px, #ddd 1px 2px); flex: none; }
.her { margin-left: 5px; }
.globe { margin-left: 8px; margin-right: 3px; }
.msg { margin-left: 14px; }
.puz { margin-left: 7px; }

.dialog { position: absolute; left: 640px; top: 236px; width: 433px; height: 442px; background: #f9f9f9; box-shadow: 0 0 6px rgba(0,0,0,.25); display: flex; flex-direction: column; padding: 0 5px 0 8px; }
.dlg-title { height: 32px; flex: none; display: flex; align-items: center; justify-content: space-between; background: #fff; margin-right: -5px; margin-left: -8px; padding: 0 0 10px 6px; color: #a5a5a5; font-size: 9.550px; }
.dlg-x { width: 17px; height: 18px; margin-right: 1px; background: #e8e8e8; color: #ccc; text-align: center; font-size: 9px; line-height: 18px; }
.tabs { display: flex; }
.tab { height: 15px; width: 37px; background: #f75c5c; color: #5d2626; border: 1px solid #999; border-bottom: 0; text-align: center; line-height: 14px; font-size: 8px; }
.pane { height: 362px; width: 420px; border: 1px solid #777; padding: 9px 9px 7px 7px; background: #fafafa; }
.group { height: 100%; border: 1px solid #888; border-radius: 2px; padding: 4px 0 0 8px; background: #fafafa; }
.frow { height: 21px; display: flex; align-items: center; color: #333; font-size: 8.400px; }
.frow label { width: 91px; flex: none; white-space: nowrap; }
.fin { width: 281px; height: 18px; border: 1px solid #888; border-radius: 2px; background: #fde9b5; color: #999; font-size: 8px; padding-left: 2px; display: flex; align-items: center; flex: none; }
.fin.plain { background: #fff; color: #333; font-size: 8.500px; position: relative; }
.clear { position: absolute; right: 3px; top: 5px; width: 9px; height: 7px; background: #999; border-radius: 2px; }
.ok { color: #3a9a2a; font-size: 10px; margin-left: 4px; }
.warn { color: #f5b030; font-size: 8px; margin-left: 4px; }
.dlg-btns { display: flex; justify-content: flex-end; gap: 5px; padding: 6px 3px 0 0; }
.dlg-btns button { height: 17px; padding: 0 3px; min-width: 19px; border: 1px solid #777; border-radius: 3px; background: #fdfdfd; color: #333; font: 8.200px "Noto Sans", sans-serif; }

.arrows { position: absolute; inset: 0; width: 1306px; height: 746px; pointer-events: none; }
.hl { position: absolute; border: 4px solid #f00; }
.h-pen { left: 89px; top: 107px; width: 34px; height: 30px; }
.h-attr { left: 134px; top: 107px; width: 31px; height: 30px; }
.h-layer { left: 53px; top: 512px; width: 217px; height: 27px; }
.h-f1 { left: 752px; top: 316px; width: 289px; height: 24px; border-width: 3.500px; }
.h-f2 { left: 752px; top: 340px; width: 289px; height: 21px; border-width: 3.500px; }
.h-f3 { left: 753px; top: 361px; width: 288px; height: 21px; border-width: 3.500px; }
.num { position: absolute; background: #fff; border: 4px solid #f00; color: #111; font: 32px/1 "Liberation Sans", sans-serif; display: flex; align-items: center; justify-content: center; }
.n1 { left: 264px; top: 415px; width: 38px; height: 47px; }
.n2 { left: 162px; top: 9px; width: 38px; height: 47px; }
.n3 { left: 242px; top: 99px; width: 38px; height: 46px; }
.n4 { left: 1090px; top: 229px; width: 38px; height: 47px; }
.n5 { left: 1142px; top: 322px; width: 38px; height: 45px; }
.n6 { left: 1097px; top: 378px; width: 38px; height: 46px; }
```
